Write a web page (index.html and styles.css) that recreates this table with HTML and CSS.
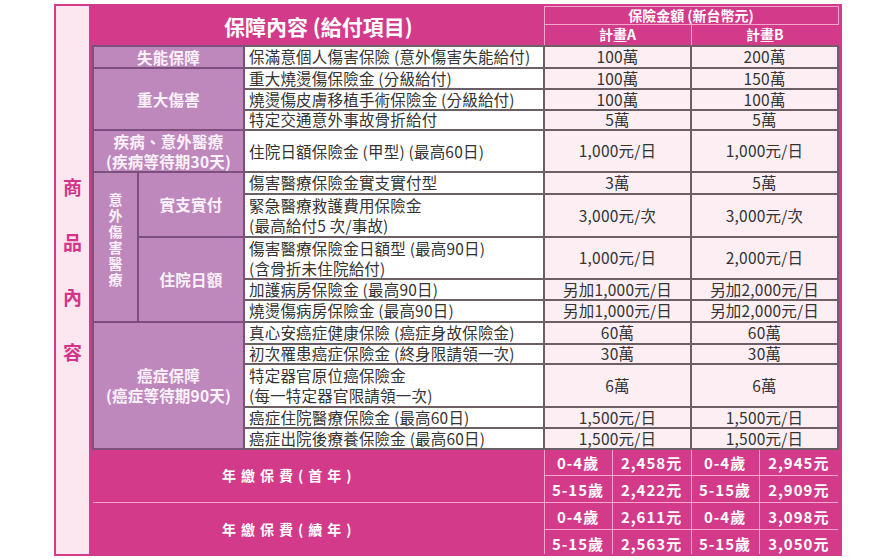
FILE: index.html
```html
<!DOCTYPE html>
<html lang="zh-Hant">
<head>
<meta charset="utf-8">
<title>商品內容</title>
<link rel="stylesheet" href="styles.css">
</head>
<body>
<div class="frame">
  <div class="side">
    <span>商</span><span>品</span><span>內</span><span>容</span>
  </div>
  <table class="plan">
    <colgroup>
      <col class="c-sub"><col class="c-cat"><col class="c-desc">
      <col class="c-age"><col class="c-amt"><col class="c-age"><col class="c-amt">
    </colgroup>
    <tr class="h1">
      <th colspan="3" rowspan="2" class="title">保障內容 (給付項目)</th>
      <th colspan="4" class="sum">保險金額 (新台幣元)</th>
    </tr>
    <tr class="h2">
      <th colspan="2" class="planname">計畫A</th>
      <th colspan="2" class="planname last">計畫B</th>
    </tr>

    <tr class="r22 first">
      <td colspan="2" class="cat">失能保障</td>
      <td class="desc">保滿意個人傷害保險 (意外傷害失能給付)</td>
      <td colspan="2" class="val">100萬</td><td colspan="2" class="val">200萬</td>
    </tr>
    <tr class="r21">
      <td colspan="2" rowspan="3" class="cat">重大傷害</td>
      <td class="desc">重大燒燙傷保險金 (分級給付)</td>
      <td colspan="2" class="val">100萬</td><td colspan="2" class="val">150萬</td>
    </tr>
    <tr class="r21">
      <td class="desc">燒燙傷皮膚移植手術保險金 (分級給付)</td>
      <td colspan="2" class="val">100萬</td><td colspan="2" class="val">100萬</td>
    </tr>
    <tr class="r20">
      <td class="desc">特定交通意外事故骨折給付</td>
      <td colspan="2" class="val">5萬</td><td colspan="2" class="val">5萬</td>
    </tr>
    <tr class="r41">
      <td colspan="2" class="cat">疾病、意外醫療<br>(疾病等待期30天)</td>
      <td class="desc">住院日額保險金 (甲型) (最高60日)</td>
      <td colspan="2" class="val">1,000元/日</td><td colspan="2" class="val">1,000元/日</td>
    </tr>
    <tr class="r22">
      <td rowspan="5" class="cat vert"><span class="vtext">意外傷害醫療</span></td>
      <td rowspan="2" class="cat">實支實付</td>
      <td class="desc">傷害醫療保險金實支實付型</td>
      <td colspan="2" class="val">3萬</td><td colspan="2" class="val">5萬</td>
    </tr>
    <tr class="r43">
      <td class="desc">緊急醫療救護費用保險金<br>(最高給付5 次/事故)</td>
      <td colspan="2" class="val">3,000元/次</td><td colspan="2" class="val">3,000元/次</td>
    </tr>
    <tr class="r42">
      <td rowspan="3" class="cat">住院日額</td>
      <td class="desc">傷害醫療保險金日額型 (最高90日)<br>(含骨折未住院給付)</td>
      <td colspan="2" class="val">1,000元/日</td><td colspan="2" class="val">2,000元/日</td>
    </tr>
    <tr class="r21">
      <td class="desc">加護病房保險金 (最高90日)</td>
      <td colspan="2" class="val">另加1,000元/日</td><td colspan="2" class="val">另加2,000元/日</td>
    </tr>
    <tr class="r22">
      <td class="desc">燒燙傷病房保險金 (最高90日)</td>
      <td colspan="2" class="val">另加1,000元/日</td><td colspan="2" class="val">另加2,000元/日</td>
    </tr>
    <tr class="r22">
      <td colspan="2" rowspan="5" class="cat">癌症保障<br>(癌症等待期90天)</td>
      <td class="desc">真心安癌症健康保險 (癌症身故保險金)</td>
      <td colspan="2" class="val">60萬</td><td colspan="2" class="val">60萬</td>
    </tr>
    <tr class="r20">
      <td class="desc">初次罹患癌症保險金 (終身限請領一次)</td>
      <td colspan="2" class="val">30萬</td><td colspan="2" class="val">30萬</td>
    </tr>
    <tr class="r43">
      <td class="desc">特定器官原位癌保險金<br>(每一特定器官限請領一次)</td>
      <td colspan="2" class="val">6萬</td><td colspan="2" class="val">6萬</td>
    </tr>
    <tr class="r21">
      <td class="desc">癌症住院醫療保險金 (最高60日)</td>
      <td colspan="2" class="val">1,500元/日</td><td colspan="2" class="val">1,500元/日</td>
    </tr>
    <tr class="r21">
      <td class="desc">癌症出院後療養保險金 (最高60日)</td>
      <td colspan="2" class="val">1,500元/日</td><td colspan="2" class="val">1,500元/日</td>
    </tr>

    <tr class="p-row p-first">
      <td colspan="3" rowspan="2" class="fee">年繳保費(首年)</td>
      <td class="age">0-4歲</td><td class="amt">2,458元</td>
      <td class="age">0-4歲</td><td class="amt last">2,945元</td>
    </tr>
    <tr class="p-row">
      <td class="age">5-15歲</td><td class="amt">2,422元</td>
      <td class="age">5-15歲</td><td class="amt last">2,909元</td>
    </tr>
    <tr class="p-row">
      <td colspan="3" rowspan="2" class="fee">年繳保費(續年)</td>
      <td class="age">0-4歲</td><td class="amt">2,611元</td>
      <td class="age">0-4歲</td><td class="amt last">3,098元</td>
    </tr>
    <tr class="p-row p-last">
      <td class="age">5-15歲</td><td class="amt">2,563元</td>
      <td class="age">5-15歲</td><td class="amt last">3,050元</td>
    </tr>
  </table>
</div>
</body>
</html>
```

FILE: styles.css
```css
* { box-sizing: border-box; }

body {
  margin: 0;
  background: #ffffff;
  font-family: "Noto Sans CJK TC", "Noto Sans", "Liberation Sans", sans-serif;
}

.frame {
  margin: 4px 0 0 54px;
  width: 788px;
  height: 552px;
  border: 2px solid #d33a8a;
  background: #d33a8a;
  display: flex;
  overflow: hidden;
}

.side {
  width: 33px;
  flex: none;
  background: #fce6f0;
  display: flex;
  flex-direction: column;
  align-items: center;
  justify-content: center;
  gap: 34px;
  padding-bottom: 22px;
  color: #d4358a;
  font-weight: 700;
  font-size: 19px;
  line-height: 21px;
}

.plan {
  margin-left: 3px;
  width: 747px;
  table-layout: fixed;
  border-collapse: collapse;
  font-size: 15.5px;
  line-height: 17px;
  letter-spacing: 0.2px;
}

.c-sub { width: 45px; }
.c-cat { width: 106px; }
.c-desc { width: 300px; }
.c-age { width: 68px; }
.c-amt { width: 79px; }

.plan th, .plan td { padding: 0; }

/* header */
.plan th {
  background: #d33a8a;
  color: #ffffff;
  font-weight: 700;
  text-align: center;
  border: 1px solid #f2a8c9;
  letter-spacing: 0;
}
.h1 { height: 18px; }
.h2 { height: 21px; }
.plan th.title {
  font-size: 21px;
  line-height: 24px;
  border-top: none;
  border-left: none;
  padding-top: 1px;
  border-right: 1px solid #f2a8c9;
}
.sum { font-size: 14px; line-height: 15px; border-top: none; border-right: none; }
.planname { font-size: 14px; line-height: 15px; }
.planname.last { border-right: none; }

/* body rows */
.r20 { height: 20px; }
.r21 { height: 21px; }
.r22 { height: 22px; }
.r41 { height: 41px; }
.r42 { height: 42px; }
.r43 { height: 43px; }

.cat {
  background: #bf88bd;
  color: #fbf1fa;
  font-weight: 700;
  text-align: center;
  border: 2px solid #7d4f7d;
  line-height: 20px;
}
.plan td.vert { vertical-align: middle; padding-bottom: 8px; }
.vtext {
  display: inline-block;
  writing-mode: vertical-rl;
  text-orientation: upright;
  font-size: 14px;
  line-height: 16px;
  letter-spacing: 2px;
}

.desc {
  background: #ffffff;
  color: #333333;
  border: 2px solid #6c5f66;
  white-space: nowrap;
  line-height: 20px;
}
.plan td.desc { padding-left: 4px; }
.r20 .desc, .r21 .desc, .r22 .desc { line-height: 17px; }

.val {
  background: #fdeef4;
  color: #333333;
  text-align: center;
  border: 2px solid #6c5f66;
  white-space: nowrap;
}

/* premium */
.p-row { height: 27px; }
.p-row td {
  background: #d33a8a;
  color: #ffffff;
  font-weight: 700;
  font-size: 15px;
  text-align: center;
  border: 1px solid #f2a8c9;
}
.p-first td { border-top: 2px solid #6c5f66; }
.p-last td { border-bottom: none; }
.p-row td.last { border-right: none; }
.p-row td.fee {
  font-size: 14px;
  letter-spacing: 5px;
  padding: 0 58px 0 0;
  border-left: none;
}
.age { letter-spacing: 1px; }
.amt { letter-spacing: 1px; }
```
